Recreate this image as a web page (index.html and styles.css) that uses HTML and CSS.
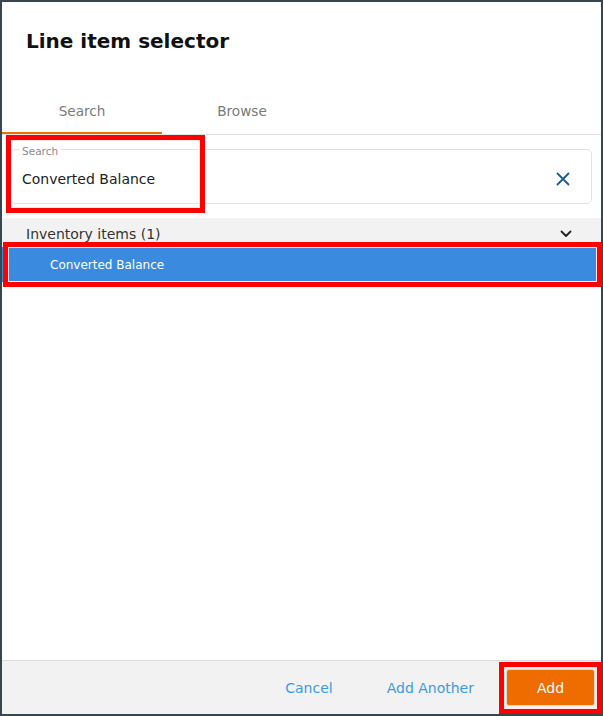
FILE: index.html
```html
<!DOCTYPE html>
<html lang="en">
<head>
<meta charset="utf-8">
<title>Line item selector</title>
<link rel="stylesheet" href="styles.css">
</head>
<body>
<div class="dialog">
  <header class="dlg-head">
    <h1 class="title">Line item selector</h1>
  </header>
  <nav class="tabs">
    <div class="tab active">Search</div>
    <div class="tab">Browse</div>
  </nav>
  <main class="dlg-body">
    <div class="field">
      <span class="field-label">Search</span>
      <span class="field-value">Converted Balance</span>
      <span class="clear">
        <svg width="14" height="14" viewBox="0 0 14 14"><path d="M1.5 1.5 L12.5 12.5 M12.5 1.5 L1.5 12.5" stroke="#1d5a8e" stroke-width="1.8" fill="none" stroke-linecap="round"/></svg>
      </span>
    </div>
    <div class="group-head">
      <span>Inventory items (1)</span>
      <svg class="chev" width="12" height="8" viewBox="0 0 12 8"><path d="M1.5 1.5 L6 6 L10.5 1.5" stroke="#222" stroke-width="1.8" fill="none" stroke-linecap="round" stroke-linejoin="round"/></svg>
    </div>
    <div class="item selected">Converted Balance</div>
  </main>
  <footer class="dlg-foot">
    <button class="btn-text btn-cancel">Cancel</button>
    <button class="btn-text">Add Another</button>
    <button class="btn-primary">Add</button>
  </footer>
  <div class="annot annot-field"></div>
  <div class="annot annot-item"></div>
  <div class="annot annot-add"></div>
</div>
</body>
</html>
```
FILE: styles.css
```css
* { box-sizing: border-box; }
html, body { margin: 0; padding: 0; background: #ffffff; }
body { font-family: "DejaVu Sans", Verdana, sans-serif; }

.dialog {
  position: relative;
  width: 603px;
  height: 716px;
  border: 2px solid #37474f;
  background: #ffffff;
  display: flex;
  flex-direction: column;
}

.dlg-head {
  height: 88px;
  padding: 27px 0 0 24px;
}
.title {
  margin: 0;
  font-size: 20px;
  line-height: 24px;
  font-weight: bold;
  color: #111111;
}

.tabs {
  display: flex;
  border-bottom: 1px solid #e3e3e3;
}
.tab {
  width: 160px;
  height: 44px;
  line-height: 42px;
  text-align: center;
  font-size: 13.6px;
  color: #7a7a7a;
  border-bottom: 2px solid transparent;
}
.tab.active { border-bottom-color: #f07000; }

.dlg-body {
  flex: 1;
  padding-top: 14px;
}

.field {
  position: relative;
  margin: 0 9px 0 8px;
  height: 55px;
  border: 1px solid #e2e2e2;
  border-radius: 5px;
  padding: 19px 0 0 11px;
  display: flex;
  align-items: flex-start;
}
.field-label {
  position: absolute;
  left: 8px;
  top: -6px;
  padding: 0 3px;
  background: #ffffff;
  font-size: 10.5px;
  line-height: 14px;
  color: #8a8a8a;
}
.field-value {
  flex: 1;
  font-size: 14px;
  line-height: 20px;
  color: #222222;
}
.clear {
  width: 14px;
  height: 14px;
  margin: 3px 21px 0 0;
  display: flex;
}

.group-head {
  margin-top: 14px;
  height: 29px;
  background: #f2f2f2;
  display: flex;
  align-items: center;
  justify-content: space-between;
  padding: 2px 29px 0 24px;
  font-size: 14px;
  color: #333333;
}
.chev { margin-top: 0; }

.item {
  height: 35px;
  line-height: 34px;
  padding: 1px 0 0 48px;
  font-size: 12px;
}
.item.selected {
  background: #3a8ae0;
  color: #ffffff;
}

.dlg-foot {
  height: 54px;
  border-top: 1px solid #dcdcdc;
  background: #f2f2f2;
  display: flex;
  align-items: center;
  justify-content: flex-end;
  gap: 12px;
  padding-right: 6px;
}
.btn-text {
  font-family: inherit;
  font-size: 14px;
  color: #3b9ae8;
  background: none;
  border: none;
  padding: 0 20px;
  height: 37px;
}
.btn-cancel { margin-right: 2px; }
.btn-primary {
  font-family: inherit;
  font-size: 14px;
  color: #ffffff;
  background: #ee6c00;
  border: 1px solid #e8d6c8;
  border-radius: 3px;
  width: 89px;
  height: 37px;
  padding: 0;
}

.annot {
  position: absolute;
  border: 5px solid #ff0000;
  box-shadow: inset 0 0 0 1px #ffe6e6;
  pointer-events: none;
}
.annot-field { left: 4px; top: 133px; width: 199px; height: 78px; }
.annot-item { left: 1px; top: 240px; width: 599px; height: 45px; }
.annot-add { left: 497px; top: 660px; width: 103px; height: 52px; }
```
